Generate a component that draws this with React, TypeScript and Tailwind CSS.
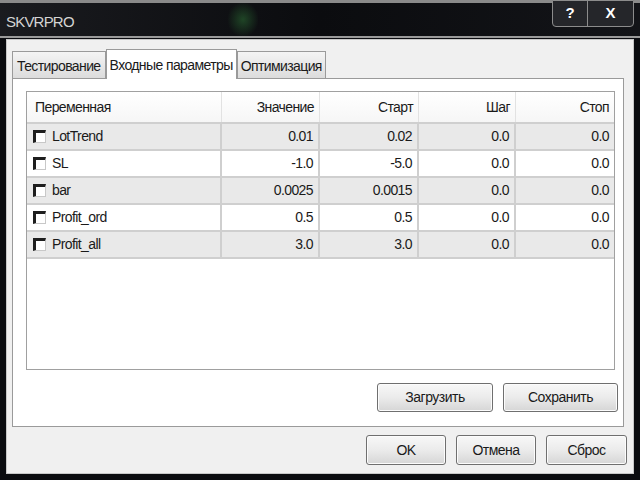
import React from 'react';

const font = { fontFamily: '"Liberation Sans Narrow", "Liberation Sans", Arial, sans-serif' };

const rows = [
  { name: 'LotTrend', value: '0.01', start: '0.02', step: '0.0', stop: '0.0' },
  { name: 'SL', value: '-1.0', start: '-5.0', step: '0.0', stop: '0.0' },
  { name: 'bar', value: '0.0025', start: '0.0015', step: '0.0', stop: '0.0' },
  { name: 'Profit_ord', value: '0.5', start: '0.5', step: '0.0', stop: '0.0' },
  { name: 'Profit_all', value: '3.0', start: '3.0', step: '0.0', stop: '0.0' },
];

function Button({ label, className }: { label: string; className: string }) {
  return (
    <div
      className={`flex items-center justify-center rounded-[3px] border border-[#6f6f6f] bg-gradient-to-b from-[#f8f8f8] via-[#ebebeb] to-[#d6d6d6] text-[14px] tracking-[-0.5px] text-[#1a1a1a] shadow-[inset_0_0_0_1px_#fcfcfc] ${className}`}
    >
      {label}
    </div>
  );
}

function Checkbox() {
  return (
    <span className="inline-block h-[13px] w-[13px] border-l-[3px] border-t-[3px] border-r border-b border-l-[#1e1e1e] border-t-[#1e1e1e] border-r-[#c8c8c8] border-b-[#c8c8c8] bg-white" />
  );
}

export default function App() {
  return (
    <div className="relative h-[480px] w-[640px] overflow-hidden bg-[#0b0c10]" style={font}>
      {/* title bar */}
      <div className="relative h-[38px] border-t-[3px] border-b-[2px] border-t-[#8a8a8a] border-b-[#9a9a9a] bg-gradient-to-r from-[#1a1b1f] via-[#0b0c0f] to-[#131418]">
        <div className="absolute left-[228px] top-0 h-full w-[30px] bg-[radial-gradient(ellipse_at_center,#1f4526_0%,transparent_75%)]" />
        <div className="absolute left-[6px] top-[8px] text-[15px] tracking-[-0.8px] text-[#d4d4d4]">SKVRPRO</div>
        <div className="absolute right-[6px] top-[-3px] flex h-[27px] rounded-b-[4px] border border-[#8c8c8c] bg-[#25262a]">
          <div className="flex w-[35px] items-center justify-center border-r border-[#8c8c8c] text-[15px] font-bold text-white">?</div>
          <div className="flex w-[45px] items-center justify-center text-[15px] font-bold text-white">X</div>
        </div>
      </div>

      {/* client area */}
      <div className="mx-[6px] mt-[1px] flex h-[435px] flex-col border border-[#c8c8c8] bg-[#f0f0f0] px-[5px] text-[14px] tracking-[-0.6px]">
        {/* tabs */}
        <div className="mt-[9px] flex items-end text-[#1a1a1a]">
          <div className="flex h-[27px] items-center border border-b-0 border-[#9a9a9a] bg-gradient-to-b from-[#f4f4f4] to-[#dcdcdc] px-[4px] pt-[3px]">
            Тестирование
          </div>
          <div className="relative z-10 mb-[-1px] flex h-[30px] items-start border border-b-0 border-[#9a9a9a] bg-white px-[3px] pt-[5px]">
            Входные параметры
          </div>
          <div className="flex h-[27px] items-center border border-b-0 border-[#9a9a9a] bg-gradient-to-b from-[#f4f4f4] to-[#dcdcdc] px-[3px] pt-[3px]">
            Оптимизация
          </div>
        </div>

        {/* tab panel */}
        <div className="mr-[4px] flex h-[349px] flex-col border border-[#9a9a9a] bg-white pl-[13px] pr-[8px] pt-[12px]">
          <div className="h-[279px] border border-[#a0a0a0] bg-white text-[#1a1a1a]">
            <div className="grid h-[32px] grid-cols-[195px_98px_99px_97px_1fr] border-b-[2px] border-[#cfcfcf] bg-gradient-to-b from-white to-[#f6f6f6]">
              <div className="flex items-center border-r border-[#e2e2e2] pl-[8px]">Переменная</div>
              <div className="flex items-center justify-end border-r border-[#e2e2e2] pr-[5px]">Значение</div>
              <div className="flex items-center justify-end border-r border-[#e2e2e2] pr-[5px]">Старт</div>
              <div className="flex items-center justify-end border-r border-[#e2e2e2] pr-[5px]">Шаг</div>
              <div className="flex items-center justify-end pr-[5px]">Стоп</div>
            </div>
            {rows.map((r, i) => (
              <div
                key={r.name}
                className={`grid h-[27px] grid-cols-[195px_98px_99px_97px_1fr] border-b-[2px] border-[#cfcfcf] ${i % 2 === 0 ? 'bg-[#e9e9e9]' : 'bg-white'}`}
              >
                <div className="flex items-center gap-[6px] border-r-[2px] border-[#cfcfcf] pl-[6px]">
                  <Checkbox />
                  <span>{r.name}</span>
                </div>
                <div className="flex items-center justify-end border-r-[2px] border-[#cfcfcf] pr-[5px]">{r.value}</div>
                <div className="flex items-center justify-end border-r-[2px] border-[#cfcfcf] pr-[5px]">{r.start}</div>
                <div className="flex items-center justify-end border-r-[2px] border-[#cfcfcf] pr-[5px]">{r.step}</div>
                <div className="flex items-center justify-end pr-[5px]">{r.stop}</div>
              </div>
            ))}
          </div>
          <div className="mt-[13px] flex justify-end gap-[10px]">
            <Button label="Загрузить" className="h-[29px] w-[116px]" />
            <Button label="Сохранить" className="mr-[-3px] h-[29px] w-[115px]" />
          </div>
        </div>

        {/* bottom buttons */}
        <div className="mt-[8px] flex justify-end gap-[10px] pr-[1px]">
          <Button label="OK" className="h-[30px] w-[80px]" />
          <Button label="Отмена" className="h-[30px] w-[80px]" />
          <Button label="Сброс" className="h-[30px] w-[81px]" />
        </div>
      </div>
    </div>
  );
}
